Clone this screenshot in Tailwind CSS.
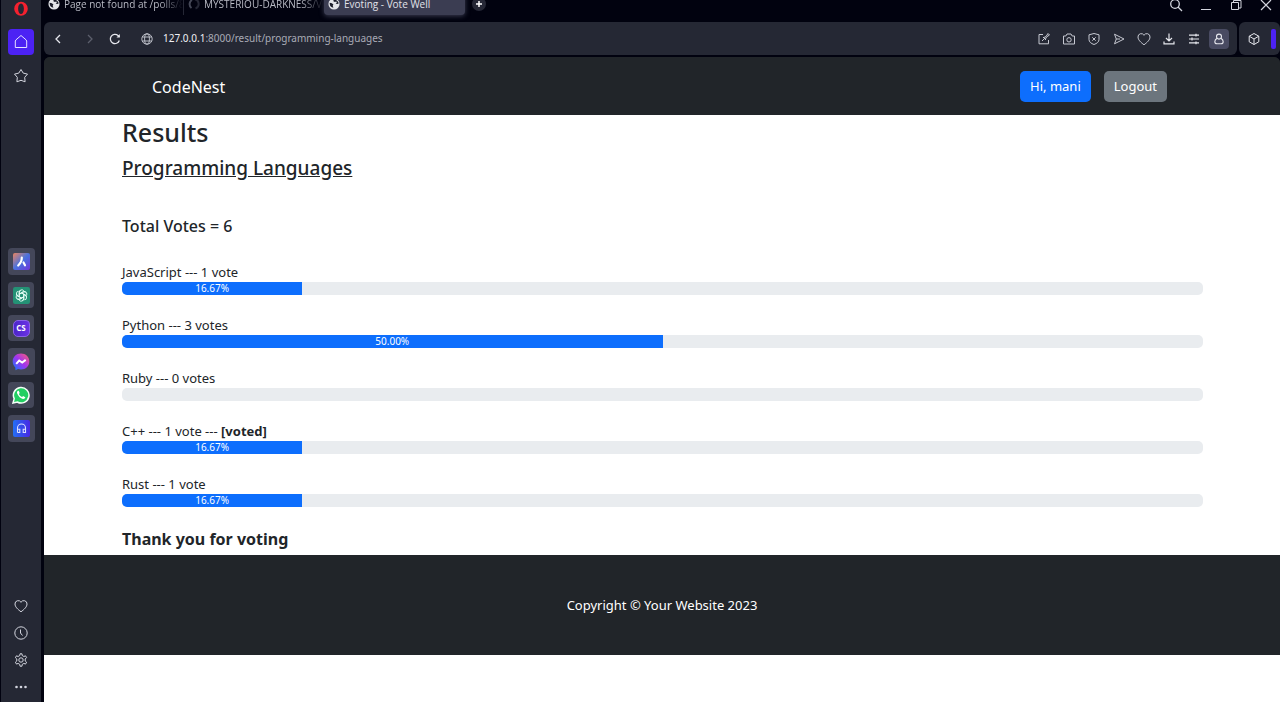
<!DOCTYPE html>
<html lang="en">
<head>
<meta charset="utf-8">
<meta name="viewport" content="width=device-width, initial-scale=1">
<title>Evoting - Vote Well</title>
<script src="https://cdn.jsdelivr.net/npm/@tailwindcss/browser@4"></script>
</head>
<body class="flex h-screen overflow-hidden bg-[#01020f] font-['Open_Sans','Noto_Sans',sans-serif] text-[#212529]">

<svg class="hidden" aria-hidden="true">
  <symbol id="globe-solid" viewBox="0 0 14 14">
    <circle cx="7" cy="7" r="6.500" fill="#e4e5ea"/>
    <path d="M2 5.500 4.500 6l1.800 1.500L5.500 9l.8 2.500C3.500 11 1.500 9 2 5.500ZM7 2 6 3.500l2 1.200 1.500-.7L10.500 5 9 6.300l1.700.8 1.800-.6C12.300 4 10 2 7 2Z" fill="#1b1d2a"/>
  </symbol>
  <symbol id="heart" viewBox="0 0 16 16">
    <path d="M8 13.800C5 11.500 2 9 2 6a3.200 3.200 0 0 1 6-1.700A3.200 3.200 0 0 1 14 6c0 3-3 5.500-6 7.800Z"/>
  </symbol>
</svg>

<aside class="flex w-11 shrink-0 flex-col border-r-3 border-l border-[#01020f] bg-[#252834] text-[#d3d5de]">
  <nav class="flex flex-col items-center" aria-label="Browser shortcuts">
    <button class="mt-px mb-3 flex h-4 w-[26px] items-center justify-center" aria-label="Opera menu">
      <svg class="size-4" viewBox="0 0 16 16"><path fill="#f5212f" fill-rule="evenodd" d="M8 .8a6.800 7 0 1 0 0 14 6.800 7 0 0 0 0-14Zm0 1.700c1.700 0 2.900 2.300 2.900 5.300S9.700 13.100 8 13.100s-2.900-2.300-2.900-5.300S6.300 2.500 8 2.500Z"/></svg>
    </button>
    <button class="flex size-[26px] items-center justify-center rounded bg-[#4c22f4]" aria-label="Home">
      <svg class="size-4" viewBox="0 0 16 16" fill="none" stroke="#e6e2ff" stroke-linejoin="round"><path d="m8 1.500 5 4.300.7 1.200v6.500H2.300V7L3 5.800Z"/></svg>
    </button>
    <button class="mt-2 flex size-[26px] items-center justify-center" aria-label="Pinboards">
      <svg class="size-4" viewBox="0 0 16 16" fill="none" stroke="currentColor" stroke-linejoin="round"><path d="m8 1.500 2.200 3.600 4.300 1-2.800 3.200.4 4.500L8 12.300l-4.100 1.500.4-4.500L1.500 6.100l4.300-1Z"/></svg>
    </button>
  </nav>
  <nav class="mt-[159px] flex flex-col items-center gap-[7px]" aria-label="Apps">
    <button class="flex size-[27px] items-center justify-center rounded bg-[#444759]" aria-label="Aria">
      <svg class="size-[17px]" viewBox="0 0 17 17"><defs><linearGradient id="aria" x1="0" y1="0" x2="1" y2="1"><stop stop-color="#ee855f"/><stop offset=".5" stop-color="#4972dd"/><stop offset="1" stop-color="#7033dc"/></linearGradient></defs><rect width="17" height="17" rx="2" fill="url(#aria)"/><path d="M8.800 4.500c0 3-1.200 5.800-3.600 8" fill="none" stroke="#fff" stroke-width="2.200" stroke-linecap="round"/><path d="m10.500 9.500 1.500 2.800" stroke="#fff" stroke-width="2.200" stroke-linecap="round"/></svg>
    </button>
    <button class="flex size-[26px] items-center justify-center rounded bg-[#444759]" aria-label="ChatGPT">
      <svg class="size-[17px]" viewBox="0 0 24 24"><rect width="24" height="24" rx="3" fill="#249275"/><g fill="none" stroke="#e7fff6" stroke-width="1.300"><path id="petal" d="M8.800 14V7.600a3.600 3.600 0 0 1 6.600-2M8.800 10.100l5-2.900a3.600 3.600 0 0 1 3.600 0"/><use href="#petal" transform="rotate(60 12 12)"/><use href="#petal" transform="rotate(120 12 12)"/><use href="#petal" transform="rotate(180 12 12)"/><use href="#petal" transform="rotate(240 12 12)"/><use href="#petal" transform="rotate(300 12 12)"/></g></svg>
    </button>
    <button class="flex size-[26px] items-center justify-center rounded bg-[#444759]" aria-label="ChatSonic">
      <span class="flex size-[17px] items-center justify-center rounded-tl-[5px] rounded-tr-sm rounded-br-[5px] rounded-bl-[5px] border border-[#8b62e8] bg-linear-to-r from-[#4c25c9] to-[#6b31e5] text-[8px] font-bold text-white">CS</span>
    </button>
    <button class="flex size-[27px] items-center justify-center rounded bg-[#444759]" aria-label="Messenger">
      <svg class="size-[18px]" viewBox="0 0 18 18"><defs><linearGradient id="msg" x1="0" y1="1" x2="1" y2="0"><stop stop-color="#087cff"/><stop offset=".5" stop-color="#a033ef"/><stop offset="1" stop-color="#ff6070"/></linearGradient></defs><path fill="url(#msg)" d="M9 .5C4.200.5.700 4 .7 8.500c0 2.400 1 4.500 2.600 5.900l.2 2.800 2.500-1.100c1 .3 2 .4 3 .4 4.800 0 8.300-3.500 8.300-8S13.800.5 9 .5Z"/><path d="m4.200 10.800 3-3.300 3 2 3.500-2.600" fill="none" stroke="#fff" stroke-width="2"/></svg>
    </button>
    <button class="flex size-[26px] items-center justify-center rounded bg-[#444759]" aria-label="WhatsApp">
      <svg class="size-[18px]" viewBox="0 0 18 18"><path d="M1 17l1.200-4.300A7.800 7.800 0 1 1 5.300 16Z" fill="#22cf62" stroke="#f4fff8" stroke-width="1.500"/><path d="M6 4.700c-1 .6-1.300 1.700-.7 3 1.200 2.700 3.200 4.600 5.600 5.300 1.200.2 2.200-.5 2.400-1.700l-2.200-1.200-1 1c-1.500-.6-2.600-1.700-3.200-3l.8-1L6.700 4.700Z" fill="#fff"/></svg>
    </button>
    <button class="flex size-[27px] items-center justify-center rounded bg-[#444759]" aria-label="Player">
      <svg class="size-[17px]" viewBox="0 0 17 17"><defs><linearGradient id="play" x1="0" y1="0" x2="1" y2="0"><stop stop-color="#246ff3"/><stop offset="1" stop-color="#4828e4"/></linearGradient></defs><rect width="17" height="17" rx="2" fill="url(#play)"/><path d="M4.500 12.500V8a4 4 0 0 1 8 0v4.500h-2.300V9.300h2.300M4.500 9.300h2.300v3.200H4.500" fill="none" stroke="#dce1ff" stroke-width="1.100"/></svg>
    </button>
  </nav>
  <nav class="mt-auto mb-[7px] flex flex-col items-center gap-[11px]" aria-label="Sidebar tools">
    <button class="size-4" aria-label="Likes"><svg class="size-4" fill="none" stroke="currentColor"><use href="#heart"/></svg></button>
    <button class="size-4" aria-label="History"><svg class="size-4" viewBox="0 0 16 16" fill="none" stroke="currentColor"><circle cx="8" cy="8" r="6.200"/><path d="M7.500 4.500V8l2 2.500"/></svg></button>
    <button class="size-4" aria-label="Settings"><svg class="size-4" viewBox="0 0 16 16" fill="none" stroke="currentColor" stroke-linejoin="round"><path d="M6.800 3.500 7 1.800h2l.2 1.700 1.700 1 1.600-.7 1.100 1.800L12.200 7v2l1.400 1.200-1.100 1.900-1.600-.7-1.700 1L9 14.200H7l-.2-1.800-1.700-1-1.600.7-1.100-1.900L3.800 9V7L2.400 5.700l1.100-1.900 1.600.7Z"/><circle cx="8" cy="8" r="2.200"/></svg></button>
    <button class="size-4" aria-label="More"><svg class="size-4" viewBox="0 0 16 16" fill="currentColor"><circle cx="3.500" cy="8" r="1.300"/><circle cx="8" cy="8" r="1.300"/><circle cx="12.500" cy="8" r="1.300"/></svg></button>
  </nav>
</aside>

<div class="flex min-w-0 grow flex-col">
  <!-- Tab strip, its top edge scrolled out of the window -->
  <header class="-mt-[7px] flex h-[29px] shrink-0 items-start text-[10px] text-[#b9bbc5]">
    <button class="flex h-[22px] w-[140px] items-center gap-1 border-r border-[#252735] pl-1">
      <svg class="size-3 shrink-0"><use href="#globe-solid"/></svg>
      <span class="grow overflow-hidden text-left whitespace-nowrap mask-r-from-80%">Page not found at /polls/8</span>
    </button>
    <button class="flex h-[22px] w-[140px] items-center gap-1 pl-1">
      <svg class="size-3 shrink-0" viewBox="0 0 12 12" fill="none" stroke="#454857" stroke-width="2"><path d="M3.500 10A4.800 4.800 0 0 1 4 2"/><path d="M7 1.300A4.800 4.800 0 0 1 7.500 10.500" stroke="#252735"/></svg>
      <span class="grow overflow-hidden text-left whitespace-nowrap mask-r-from-80%">MYSTERIOU-DARKNESS/V</span>
    </button>
    <button class="flex h-[22px] w-[141px] items-center gap-1 rounded bg-[#3b3d52] pl-1 whitespace-nowrap text-[#e2e3ea] shadow-[0_1px_5px_#3b3d52]">
      <svg class="size-3 shrink-0"><use href="#globe-solid"/></svg>
      Evoting - Vote Well
    </button>
    <button class="mt-1 ml-[7px] flex size-[14px] items-center justify-center rounded-full bg-[#252735]" aria-label="New tab">
      <svg class="size-2" viewBox="0 0 8 8" stroke="#fff" stroke-width="1.500"><path d="M4 1v6M1 4h6"/></svg>
    </button>
    <div class="mt-1 mr-[6px] ml-auto flex gap-[14px] text-[#d3d5de]">
      <button class="size-4" aria-label="Search tabs"><svg class="size-4" viewBox="0 0 16 16" fill="none" stroke="currentColor" stroke-width="1.300"><circle cx="7" cy="7" r="4.300"/><path d="m10 10 4 4"/></svg></button>
      <button class="size-4" aria-label="Minimize"><svg class="size-4" viewBox="0 0 16 16" stroke="currentColor"><path d="M3 12.500h10"/></svg></button>
      <button class="size-4" aria-label="Restore"><svg class="size-4" viewBox="0 0 16 16" fill="none" stroke="currentColor"><path d="M3.500 5.500h7v7h-7ZM5.500 5.500v-2h7.500v7.500h-2.500"/></svg></button>
      <button class="size-4" aria-label="Close"><svg class="size-4" viewBox="0 0 16 16" stroke="currentColor" stroke-width="1.200"><path d="m3 3 10 10M13 3 3 13"/></svg></button>
    </div>
  </header>

  <div class="flex h-[33px] shrink-0 gap-[2px] text-[#c6c8d1]">
    <div class="flex grow items-center rounded-md bg-[#252834] pr-[10px] pl-[6px]">
      <button class="size-4" aria-label="Back"><svg class="size-4" viewBox="0 0 16 16" fill="none" stroke="#e6e7ed" stroke-width="1.300"><path d="M10 4 6 8l4 4"/></svg></button>
      <button class="ml-4 size-4" aria-label="Forward"><svg class="size-4" viewBox="0 0 16 16" fill="none" stroke="#5c5f6c" stroke-width="1.300"><path d="m6 4 4 4-4 4"/></svg></button>
      <button class="ml-[9px] size-4" aria-label="Reload"><svg class="size-4" viewBox="0 0 16 16" fill="none" stroke="#e6e7ed" stroke-width="1.300"><path d="M12.300 9.500A4.600 4.600 0 1 1 11 4.500l1.500 1.300"/><path d="M12.800 3v3.500H9.500Z" fill="#e6e7ed" stroke="none"/></svg></button>
      <svg class="ml-4 size-4" viewBox="0 0 16 16" fill="none" stroke="currentColor" stroke-width=".9"><circle cx="8" cy="8" r="5.200"/><ellipse cx="8" cy="8" rx="2.400" ry="5.200"/><path d="M3.300 6h9.400M3.300 10h9.400"/></svg>
      <div role="textbox" aria-label="Address" tabindex="0" class="ml-2 grow font-['Noto_Sans',sans-serif] text-[10px] whitespace-nowrap text-[#a9abb6]"><span class="text-[#f0f0f4]">127.0.0.1</span>:8000/result/programming-languages</div>
      <div class="flex items-center gap-[9px]">
        <button class="size-4" aria-label="Easy setup"><svg class="size-4" viewBox="0 0 16 16" fill="none" stroke="currentColor"><path d="M7 3.500H3v9.300h9.500V9M6 10l2-2M7 6l3 3M8 6.500l2-1 2-3 1.500 1.500-3 2-1 2"/></svg></button>
        <button class="size-4" aria-label="Snapshot"><svg class="size-4" viewBox="0 0 16 16" fill="none" stroke="currentColor" stroke-linejoin="round"><path d="M2.500 5h2.300L6 3h4l1.200 2h2.300v8h-11Z"/><circle cx="8" cy="8.800" r="2.200"/></svg></button>
        <button class="size-4" aria-label="Ad blocker"><svg class="size-4" viewBox="0 0 16 16" fill="none" stroke="currentColor" stroke-linejoin="round"><path d="m8 2.500 5 1.300v4.700c0 2.300-2 4-5 5-3-1-5-2.700-5-5V3.800Z"/><path d="m6.300 6.300 3.400 3.400M9.700 6.300 6.300 9.700"/></svg></button>
        <button class="size-4" aria-label="My Flow"><svg class="size-4" viewBox="0 0 16 16" fill="none" stroke="currentColor" stroke-linejoin="round"><path d="M3.500 3.200 13 8l-9.500 4.800L5.300 8ZM5.300 8H9"/></svg></button>
        <button class="size-4" aria-label="Add to bookmarks"><svg class="size-4" fill="none" stroke="currentColor"><use href="#heart"/></svg></button>
        <button class="size-4" aria-label="Downloads"><svg class="size-4" viewBox="0 0 16 16" fill="none" stroke="#e6e7ed" stroke-width="1.200"><path d="M8 2.500v7.300M5 7l3 3 3-3M3 10.500v2.300h10v-2.300"/></svg></button>
        <button class="size-4" aria-label="Page settings"><svg class="size-4" viewBox="0 0 16 16" fill="none" stroke="#e6e7ed" stroke-width="1.200"><path d="M3 4.200h10M3 8h10M3 11.800h10M10 2.800v2.800M6 6.600v2.800M10 10.400v2.800"/></svg></button>
        <button class="-mx-[2px] flex size-5 items-center justify-center rounded bg-[#494b62]" aria-label="Profile"><svg class="size-4" viewBox="0 0 16 16" fill="none" stroke="#e6e7ed" stroke-width="1.100"><circle cx="8" cy="5.600" r="2.500"/><path d="M6 7.300c-1.500 1-2.200 2.200-2.200 3.500 0 1.400 1 2 2.200 2h4c1.200 0 2.200-.6 2.200-2 0-1.300-.7-2.500-2.200-3.500"/></svg></button>
      </div>
    </div>
    <div class="flex w-[41px] items-center justify-between rounded-md bg-[#252834] pr-1 pl-[7px]">
      <button class="size-4" aria-label="Extensions"><svg class="size-4" viewBox="0 0 16 16" fill="none" stroke="#e6e7ed" stroke-linejoin="round"><path d="m8 2.500 4.800 2.700v5.600L8 13.500l-4.800-2.700V5.200ZM3.200 5.200 8 8l4.800-2.800M8 8v5.500"/></svg></button>
      <span class="h-5 w-[5px] rounded-xs bg-[#4c22f4]"></span>
    </div>
  </div>

  <div class="mt-[2px] flex min-h-0 grow flex-col overflow-hidden rounded-t-md bg-[linear-gradient(#212529_50%,#fff_50%)] font-['Noto_Sans',sans-serif]">
    <nav class="flex h-[58px] shrink-0 items-center bg-[#212529] px-[108px] pt-px text-white">
      <a href="#" class="text-[16px]">CodeNest</a>
      <div class="mr-[5px] ml-auto flex gap-[13px] text-[13px]">
        <button class="h-[31px] rounded-[5px] bg-[#0d6efd] px-[10px] pt-px">Hi, mani</button>
        <button class="h-[31px] rounded-[5px] bg-[#6c757d] px-[10px] pt-px">Logout</button>
      </div>
    </nav>

    <main class="flex h-[440px] shrink-0 flex-col bg-white pr-[77px] pl-[78px]">
      <h1 class="mt-px text-[25px] leading-8 font-medium">Results</h1>
      <h2 class="mt-1 text-[19px] leading-8 font-medium underline">Programming Languages</h2>
      <h3 class="mt-[30px] text-[16px] leading-6 font-medium">Total Votes = 6</h3>
      <ul class="mt-6 flex flex-col gap-5 text-[13px] leading-5">
        <li><span id="js">JavaScript --- 1 vote</span>
          <div role="progressbar" aria-labelledby="js" aria-valuenow="16.67" class="h-[13px] overflow-hidden rounded-[5px] bg-[#e9ecef]"><div class="h-full bg-[#0d6efd] text-center text-[10px] leading-[13px] text-white" style="width:16.67%">16.67%</div></div></li>
        <li><span id="py">Python --- 3 votes</span>
          <div role="progressbar" aria-labelledby="py" aria-valuenow="50" class="h-[13px] overflow-hidden rounded-[5px] bg-[#e9ecef]"><div class="h-full bg-[#0d6efd] text-center text-[10px] leading-[13px] text-white" style="width:50%">50.00%</div></div></li>
        <li><span id="rb">Ruby --- 0 votes</span>
          <div role="progressbar" aria-labelledby="rb" aria-valuenow="0" class="h-[13px] overflow-hidden rounded-[5px] bg-[#e9ecef]"></div></li>
        <li><span id="cpp">C++ --- 1 vote --- <b>[voted]</b></span>
          <div role="progressbar" aria-labelledby="cpp" aria-valuenow="16.67" class="h-[13px] overflow-hidden rounded-[5px] bg-[#e9ecef]"><div class="h-full bg-[#0d6efd] text-center text-[10px] leading-[13px] text-white" style="width:16.67%">16.67%</div></div></li>
        <li><span id="rs">Rust --- 1 vote</span>
          <div role="progressbar" aria-labelledby="rs" aria-valuenow="16.67" class="h-[13px] overflow-hidden rounded-[5px] bg-[#e9ecef]"><div class="h-full bg-[#0d6efd] text-center text-[10px] leading-[13px] text-white" style="width:16.67%">16.67%</div></div></li>
      </ul>
      <p class="mt-5 text-[16px] leading-6 font-bold">Thank you for voting</p>
    </main>

    <footer class="flex h-[100px] shrink-0 items-center justify-center bg-[#212529] pt-px text-[13px] text-white">
      <p>Copyright © Your Website 2023</p>
    </footer>
  </div>
</div>
</body>
</html>
